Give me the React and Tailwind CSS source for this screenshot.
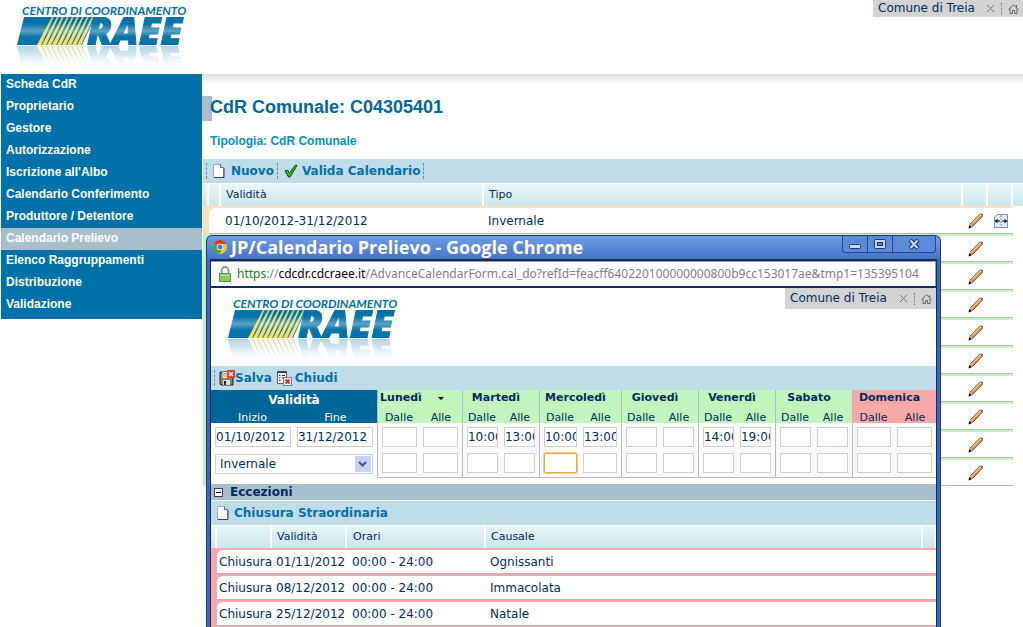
import { useState } from 'react';

const menuItems = [
  'Scheda CdR',
  'Proprietario',
  'Gestore',
  'Autorizzazione',
  "Iscrizione all'Albo",
  'Calendario Conferimento',
  'Produttore / Detentore',
  'Calendario Prelievo',
  'Elenco Raggruppamenti',
  'Distribuzione',
  'Validazione',
];

const days = [
  { name: 'Lunedì', caret: true, slots: [['', ''], ['', '']] },
  { name: 'Martedì', slots: [['10:00', '13:00'], ['', '']] },
  { name: 'Mercoledì', slots: [['10:00', '13:00'], ['', '']] },
  { name: 'Giovedì', slots: [['', ''], ['', '']] },
  { name: 'Venerdì', slots: [['14:00', '19:00'], ['', '']] },
  { name: 'Sabato', slots: [['', ''], ['', '']] },
  { name: 'Domenica', holiday: true, slots: [['', ''], ['', '']] },
];

const dayCols = [
  'w-[43px]', 'w-[42px]', 'w-[39px]', 'w-[38px]', 'w-[41px]', 'w-[41px]', 'w-[39px]',
  'w-[38px]', 'w-[39px]', 'w-[38px]', 'w-[39px]', 'w-[38px]', 'w-[42px]', 'w-[42px]',
];

const closures = [
  { date: '01/11/2012', hours: '00:00 - 24:00', reason: 'Ognissanti' },
  { date: '08/12/2012', hours: '00:00 - 24:00', reason: 'Immacolata' },
  { date: '25/12/2012', hours: '00:00 - 24:00', reason: 'Natale' },
];

const Logo = () => (
  <div className="flex h-[62px] flex-col">
    <svg width="176" height="11" viewBox="0 0 176 11" className="overflow-visible">
      <text
        x="7"
        y="9"
        fontFamily="Lato, 'Open Sans', sans-serif"
        fontWeight="700"
        fontStyle="italic"
        fontSize="12"
        fill="#0071a8"
      >
        CENTRO DI COORDINAMENTO
      </text>
    </svg>
    <svg
      width="176"
      height="28"
      viewBox="0 11 176 28"
      className="[-webkit-box-reflect:below_1px_linear-gradient(transparent_25%,rgba(0,0,0,0.3))]"
    >
      <defs>
        <linearGradient id="logoBlue" gradientUnits="userSpaceOnUse" x1="0" y1="11" x2="0" y2="39">
          <stop offset="0" stopColor="#0071a8" />
          <stop offset="0.25" stopColor="#0b76ab" />
          <stop offset="0.5" stopColor="#5ba3c7" />
          <stop offset="0.7" stopColor="#0a76ab" />
          <stop offset="1" stopColor="#0071a8" />
        </linearGradient>
        <linearGradient id="logoYellow" gradientUnits="userSpaceOnUse" x1="0" y1="11" x2="0" y2="39">
          <stop offset="0" stopColor="#cfd37e" />
          <stop offset="0.5" stopColor="#f5e88c" />
          <stop offset="1" stopColor="#fbdc52" />
        </linearGradient>
      </defs>
      <polygon points="2,39 9,11 80,11 67,39" fill="url(#logoBlue)" />
      {[0, 1, 2, 3, 4, 5, 6, 7, 8].map((i) => {
        const b = 22 + i * 5;
        const t = 37 + i * 5;
        return (
          <polygon
            key={i}
            points={`${b},39 ${b + 4.2},39 ${t + 1.6},11 ${t},11`}
            fill="url(#logoYellow)"
          />
        );
      })}
      <text
        x="72"
        y="39"
        fontFamily="'Open Sans', Lato, sans-serif"
        fontWeight="800"
        fontStyle="italic"
        fontSize="39"
        fill="url(#logoBlue)"
        stroke="url(#logoBlue)"
        strokeWidth="1"
      >
        RAEE
      </text>
    </svg>
  </div>
);

const PageIcon = () => (
  <svg width="12" height="14" viewBox="0 0 12 14">
    <path d="M.5 .5H7.5L10.5 3.5V13.5H.5Z" fill="#fff" stroke="#9aa8b8" />
    <path d="M7.5 .5V3.5H10.5" fill="#dfe6f0" stroke="#55658a" />
    <path d="M11 4V13.5H1" fill="none" stroke="#2e3f6b" />
  </svg>
);

const CheckIcon = () => (
  <svg width="14" height="14" viewBox="0 0 14 14">
    <path d="M1 7L3.5 6L5.5 9L11.5 1L13 1.5L6 13H4.5Z" fill="#19d219" stroke="#0b3d0b" strokeWidth="1" />
  </svg>
);

const PencilIcon = () => (
  <svg width="16" height="16" viewBox="0 0 16 16" className="mx-auto block">
    <path d="M2.5 10.5L11.8 1.2L14.3 1L14.4 3.4L5 13L1 15Z" fill="#d98b3c" stroke="#5a4a52" strokeWidth="0.8" />
    <path d="M4 10.6L12.6 2" stroke="#f7cf9c" strokeWidth="1.2" />
    <path d="M2.5 10.8L4.8 13L1 15Z" fill="#d8c4b8" />
    <path d="M1.7 12L3.8 14L.5 15.5Z" fill="#050510" />
  </svg>
);

const SplitIcon = () => (
  <svg width="16" height="16" viewBox="0 0 16 16" className="mx-auto block">
    <path d="M1.5 4L4.5 1.5H14.5V14.5H1.5Z" fill="#e3ebf8" stroke="#7d8ba8" />
    <path d="M8 2V14" stroke="#7d8ba8" strokeDasharray="2 1" />
    <path d="M2 8H7M9 8H14" stroke="#000" />
    <path d="M4.5 5.5L2 8L4.5 10.5ZM11.5 5.5L14 8L11.5 10.5Z" fill="#101828" />
  </svg>
);

const SaveIcon = () => (
  <svg width="16" height="16" viewBox="0 0 16 16">
    <path d="M1 2H14V15H2L1 14Z" fill="#8a8358" stroke="#23222a" />
    <rect x="3.5" y="2" width="7" height="6" fill="#f4f4f4" />
    <path d="M4 4H9M4 6H9" stroke="#8a8fa0" />
    <rect x="4" y="10" width="7" height="5" fill="#dcdce6" />
    <rect x="5" y="11" width="2" height="4" fill="#23222a" />
    <rect x="8" y="0" width="8" height="8" fill="#ee3d1c" />
    <path d="M10 2L14 6M14 2L10 6" stroke="#fff" strokeWidth="1.4" />
  </svg>
);

const CloseFormIcon = () => (
  <svg width="16" height="16" viewBox="0 0 16 16">
    <path d="M1.5 1.5H10.5V13.5H1.5Z" fill="#f7f9fa" stroke="#5b6478" />
    <path d="M1.5 2H10.5" stroke="#3b4358" strokeWidth="2" />
    <path d="M3 5.5H4.5M6 5.5H9M3 8H4.5M6 8H8M3 10.5H4.5" stroke="#27303f" strokeWidth="1.2" />
    <rect x="7.5" y="7.5" width="8" height="8" fill="#fff" stroke="#7b8190" />
    <path d="M9.5 9.5L13.5 13.5M13.5 9.5L9.5 13.5" stroke="#e8321a" strokeWidth="2" />
  </svg>
);

const ChromeIcon = () => (
  <svg width="14" height="14" viewBox="0 0 14 14">
    <circle cx="7" cy="7" r="7" fill="#f4c51c" />
    <path d="M7 7L1 3.4A7 7 0 0 1 13.3 4H7Z" fill="#dd3b2a" />
    <path d="M7 7L1 3.4A7 7 0 0 0 6.3 14L9.5 8.6Z" fill="#3aa845" />
    <circle cx="7" cy="7" r="3.3" fill="#fff" />
    <circle cx="7" cy="7" r="2.5" fill="#3f7fd0" />
  </svg>
);

const LockIcon = () => (
  <svg width="12" height="16" viewBox="0 0 12 16">
    <path d="M2.5 8V4.5A3.5 3.5 0 0 1 9.5 4.5V8" fill="none" stroke="#8e8e8e" strokeWidth="1.8" />
    <rect x="0.5" y="7.5" width="11" height="8" fill="#8ccb62" stroke="#5b9a3c" />
    <path d="M1 9.5H11" stroke="#b9e39b" />
  </svg>
);

const Grip = () => <span className="h-4 border-l border-dashed border-[#6f86a3]" />;

const AccountBar = ({ className }) => (
  <div className={`flex items-center bg-[#d3d3d3] pl-[5px] text-[#002b5c] ${className}`}>
    <span className="pb-[2px] text-[12px] leading-4">Comune di Treia</span>
    <button aria-label="Chiudi sessione" className="ml-auto">
      <svg width="9" height="9" viewBox="0 0 9 9">
        <path d="M1 1L8 8M8 1L1 8" stroke="#777" />
      </svg>
    </button>
    <span className="mx-[6px] h-3 border-l border-dotted border-gray-500" />
    <button aria-label="Home" className="pr-1">
      <svg width="11" height="10" viewBox="0 0 11 10" fill="none" stroke="#666">
        <path d="M.5 5.5L5.5 .7L10.5 5.5M2 4.5V9.5H4.5V6.5H6.5V9.5H9V4.5M8.5 1V3" />
      </svg>
    </button>
  </div>
);

const headCell = 'border-r-2 border-white bg-linear-to-b from-[#e9f5f7] to-[#cbe6ec] p-0 text-left font-normal';

const Calendars = () => (
  <table className="w-full table-fixed border-separate border-spacing-0">
    <colgroup>
      <col className="w-[6px]" />
      <col className="w-[12px]" />
      <col className="w-[263px]" />
      <col />
      <col className="w-[25px]" />
      <col className="w-[25px]" />
      <col className="w-[10px]" />
    </colgroup>
    <thead>
      <tr className="h-[22px]">
        <th className={headCell} />
        <th className={headCell} />
        <th className={`${headCell} pl-[5px]`}>Validità</th>
        <th className={`${headCell} pl-[5px]`}>Tipo</th>
        <th className={headCell} />
        <th className={headCell} />
        <th className="bg-linear-to-b from-[#e9f5f7] to-[#cbe6ec] p-0" />
      </tr>
    </thead>
    <tbody className="text-[12px]">
      {Array.from({ length: 10 }).map((_, i) => {
        const strip = i === 0 ? 'bg-[#f8e4bc]' : 'bg-[#c1f5bd]';
        const line = i === 0 ? 'border-t-[#f8e4bc]' : 'border-t-[#c1f5bd]';
        const cell = `border-t-2 border-b border-b-[#b4b4c4] ${line} p-0`;
        return (
          <tr key={i} className="h-7">
            <td className={`${strip} p-0`} />
            <td className={`${strip} p-0 pt-[2px]`}>
              <div className="h-[26px] rounded-tl-md border-b border-[#b4b4c4] bg-white" />
            </td>
            <td className={`${cell} pl-1`}>{i === 0 && '01/10/2012-31/12/2012'}</td>
            <td className={`${cell} pl-1`}>{i === 0 && 'Invernale'}</td>
            <td className={cell}>
              <button aria-label="Modifica" className="block w-full"><PencilIcon /></button>
            </td>
            <td className={cell}>
              {i === 0 && <button aria-label="Dividi" className="block w-full"><SplitIcon /></button>}
            </td>
            <td />
          </tr>
        );
      })}
    </tbody>
  </table>
);

const fieldClass = 'block h-5 w-full border border-[#d3cfc6] bg-white text-[12px] text-[#002b5c] outline-none';

const Schedule = () => (
  <table className="w-full table-fixed border-separate border-spacing-0">
    <colgroup>
      <col />
      <col />
      {dayCols.map((w, i) => <col key={i} className={w} />)}
    </colgroup>
    <thead className="text-[11px]">
      <tr className="h-5">
        <th colSpan={2} className="bg-[#006699] p-0 text-[12px] leading-4 text-white">Validità</th>
        {days.map((day) => (
          <th
            key={day.name}
            colSpan={2}
            className={`border-l border-[#b8b8c8] p-0 pb-1 leading-[14px] whitespace-nowrap ${day.caret ? 'pr-4' : 'pr-[10px]'} ${day.holiday ? 'bg-[#f8a8a8]' : 'bg-[#c1f5bd]'}`}
          >
            {day.name}
            {day.caret && (
              <svg width="6" height="3" viewBox="0 0 6 3" className="ml-4 inline-block align-middle">
                <path d="M0 0H6L3 3Z" fill="#000" />
              </svg>
            )}
          </th>
        ))}
      </tr>
      <tr className="h-[13px] leading-[11px]">
        <th className="bg-[#006699] p-0 pt-[2px] font-normal text-white">Inizio</th>
        <th className="bg-[#006699] p-0 pt-[2px] font-normal text-white">Fine</th>
        {days.map((day) => ['Dalle', 'Alle'].map((label, i) => (
          <th
            key={day.name + label}
            className={`p-0 pt-[2px] font-normal ${i === 0 ? 'border-l border-[#b8b8c8]' : ''} ${day.holiday ? 'bg-[#f8a8a8]' : 'bg-[#c1f5bd]'}`}
          >
            {label}
          </th>
        )))}
      </tr>
    </thead>
    <tbody>
      {[0, 1].map((row) => (
        <tr key={row}>
          {row === 0 ? (
            <>
              <td className="pt-1 pr-[3px] pb-[3px] pl-1">
                <input aria-label="Inizio" defaultValue="01/10/2012" className={fieldClass} />
              </td>
              <td className="pt-1 pr-1 pb-[3px] pl-[3px]">
                <input aria-label="Fine" defaultValue="31/12/2012" className={fieldClass} />
              </td>
            </>
          ) : (
            <td colSpan={2} className="px-1 pt-[3px] pb-1">
              <div className="relative">
                <select aria-label="Tipo" className={`${fieldClass} appearance-none pl-1`}>
                  <option>Invernale</option>
                  <option>Estivo</option>
                </select>
                <span className="pointer-events-none absolute top-[2px] right-[2px] flex h-4 w-4 items-center justify-center bg-[#c3d3fb]">
                  <svg width="9" height="6" viewBox="0 0 9 6">
                    <path d="M1 1L4.5 4.5L8 1" fill="none" stroke="#44557f" strokeWidth="2" />
                  </svg>
                </span>
              </div>
            </td>
          )}
          {days.map((day) => day.slots[row].map((value, i) => {
            const active = row === 1 && i === 0 && day.name === 'Mercoledì';
            return (
              <td
                key={day.name + i}
                className={`border-[#b8b8c8] bg-[#fafafa] ${row === 0 ? 'pt-1 pb-[3px]' : 'border-b pt-[3px] pb-1'} ${i === 0 ? 'border-l pr-[3px] pl-1' : 'pr-1 pl-[3px]'}`}
              >
                <input
                  aria-label={`${day.name} ${i === 0 ? 'dalle' : 'alle'} ${row + 1}`}
                  defaultValue={value}
                  className={active
                    ? 'block h-5 w-full rounded-xs border border-[#e0a840] bg-white ring-1 ring-[#f0cf90] outline-none'
                    : fieldClass}
                />
              </td>
            );
          }))}
        </tr>
      ))}
    </tbody>
  </table>
);

const Exceptions = () => (
  <table className="w-full table-fixed border-separate border-spacing-0">
    <colgroup>
      <col className="w-[6px]" />
      <col className="w-[55px]" />
      <col className="w-[75px]" />
      <col className="w-[139px]" />
      <col />
      <col className="w-[13px]" />
    </colgroup>
    <thead>
      <tr className="h-[22px]">
        <th className={headCell} />
        <th className={headCell} />
        <th className={`${headCell} pl-[5px]`}>Validità</th>
        <th className={`${headCell} pl-[6px]`}>Orari</th>
        <th className={`${headCell} pl-[5px]`}>Causale</th>
        <th className={headCell} />
      </tr>
    </thead>
    <tbody className="text-[12px]">
      {closures.map((c) => (
        <tr key={c.date} className="h-[26px] bg-[#f8a8a8]">
          <td className="p-0" />
          <td colSpan={5} className="p-0 pt-[2px]">
            <div className="flex h-6 items-center rounded-tl-md border-b border-[#b4b4c4] bg-white">
              <span className="w-[59px] pl-[2px]">Chiusura</span>
              <span className="w-[76px] pt-px">{c.date}</span>
              <span className="w-[138px] pt-px">{c.hours}</span>
              <span className="pt-px">{c.reason}</span>
            </div>
          </td>
        </tr>
      ))}
      <tr className="h-[2px] bg-[#f8a8a8]"><td colSpan={6} className="p-0" /></tr>
    </tbody>
  </table>
);

const Popup = () => {
  const [open, setOpen] = useState(true);

  return (
    <section className="absolute top-[235px] bottom-0 left-[206px] flex w-[735px] flex-col overflow-hidden rounded-t-md border-x border-t border-[#2b3a5c] bg-[#3a68bf] px-[3px]">
      <div className="-mx-[3px] flex h-[23px] shrink-0 items-start bg-linear-to-b from-[#6e9ce4] to-[#4473cb] pl-[6px]">
        <div className="flex h-[22px] items-center gap-1">
          <ChromeIcon />
          <h2 className="font-['Open_Sans',sans-serif] text-[18px] leading-[22px] font-bold whitespace-nowrap text-white">
            JP/Calendario Prelievo - Google Chrome
          </h2>
        </div>
        <div className="mr-1 ml-auto flex h-[17px] rounded-b-sm border-x border-b border-[#22458f] bg-[#5c8bd9]">
          <button aria-label="Riduci" className="flex w-[25px] items-end justify-center border-r border-[#22458f] pb-[3px]">
            <svg width="12" height="5" viewBox="0 0 12 5"><rect x=".5" y=".5" width="11" height="4" rx="1" fill="#c9daf7" stroke="#1c3872" /></svg>
          </button>
          <button aria-label="Ingrandisci" className="flex w-[25px] items-center justify-center border-r border-[#22458f]">
            <svg width="12" height="11" viewBox="0 0 12 11">
              <rect x=".5" y=".5" width="11" height="9" rx="1" fill="#c9daf7" stroke="#1c3872" />
              <rect x="3.5" y="3.5" width="5" height="3" fill="#5c8bd9" stroke="#1c3872" />
            </svg>
          </button>
          <button aria-label="Chiudi finestra" className="flex w-[42px] items-center justify-center">
            <svg width="12" height="11" viewBox="0 0 12 11">
              <path d="M2 1L10 9.5M10 1L2 9.5" stroke="#1c3872" strokeWidth="4.4" />
              <path d="M2.5 1.5L9.5 9M9.5 1.5L2.5 9" stroke="#c9daf7" strokeWidth="2.2" />
            </svg>
          </button>
        </div>
      </div>

      <div className="flex min-h-0 flex-1 flex-col border-x border-t-2 border-[#14285c] bg-white">
        <div className="flex h-[25px] shrink-0 items-center gap-[6px] overflow-hidden border-t border-r border-[#9a9a9a] pr-[2px] pl-2">
          <span className="shrink-0"><LockIcon /></span>
          <div className="overflow-hidden font-['Noto_Sans',sans-serif] text-[12px] whitespace-nowrap text-[#808080]">
            <span className="text-[#0a8a0a]">https</span>://<span className="text-black">cdcdr.cdcraee.it</span>
            /AdvanceCalendarForm.cal_do?refId=feacff640220100000000800b9cc153017ae&tmp1=135395104
          </div>
        </div>
        <div className="flex h-20 shrink-0 items-start justify-between border-t-2 border-[#14285c]">
          <div className="pt-[11px] pl-[15px]"><Logo /></div>
          <AccountBar className="h-[21px] w-[151px]" />
        </div>

        <div className="flex h-6 shrink-0 items-center bg-[#c0dce6] pb-px pl-[3px] text-[12px] font-bold text-[#0071a8]">
          <Grip />
          <button className="ml-1 flex items-center"><SaveIcon />Salva</button>
          <button className="ml-1 flex items-center gap-[3px]"><CloseFormIcon />Chiudi</button>
        </div>

        <Schedule />

        <h3 className="mt-[6px] flex h-4 shrink-0 items-center gap-[7px] bg-[#a7bfcd] pl-[3px] text-[12px] font-bold">
          <button
            aria-label="Espandi o comprimi"
            onClick={() => setOpen(!open)}
            className="flex h-[9px] w-[9px] items-center justify-center border border-[#404040] bg-white"
          >
            <span className="h-px w-[5px] bg-black" />
          </button>
          Eccezioni
        </h3>
        {open && (
          <>
            <div className="my-px flex h-6 shrink-0 items-center bg-[#c0dce6] pb-px pl-[6px] text-[12px] font-bold text-[#0071a8]">
              <button className="flex items-center gap-[5px]"><PageIcon />Chiusura Straordinaria</button>
            </div>
            <Exceptions />
          </>
        )}
      </div>
    </section>
  );
};

const App = () => (
  <div className="relative h-screen overflow-hidden bg-white font-['DejaVu_Sans',sans-serif] text-[11px] text-[#002b5c]">
    <header className="flex h-[74px] items-start justify-between">
      <div className="pt-[6px] pl-[15px]"><Logo /></div>
      <AccountBar className="h-[17px] w-[150px]" />
    </header>

    <div className="flex items-start pl-px">
      <nav className="flex w-[201px] shrink-0 flex-col bg-[#0071a8] pb-[3px] font-['Liberation_Sans',sans-serif] text-[12px] font-bold text-white">
        {menuItems.map((item) => (
          <a
            key={item}
            href="#"
            className={`flex h-[22px] items-center pb-[2px] pl-[5px] ${item === 'Calendario Prelievo' ? 'bg-[#a7bfcd]' : ''}`}
          >
            {item}
          </a>
        ))}
      </nav>

      <main className="min-w-0 flex-1">
        <div className="ml-px h-[22px] bg-linear-to-b from-[#e0e0e0] to-white to-50%" />
        <div className="flex font-['Liberation_Sans',sans-serif]">
          <span className="h-[25px] w-[10px] bg-[#a7bfcd]" />
          <h1 className="-ml-[2px] text-[18px] leading-[22px] font-bold text-[#006699]">
            CdR Comunale: C04305401
          </h1>
        </div>
        <p className="mt-3 mb-[10px] pl-2 font-['Liberation_Sans',sans-serif] text-[12px] leading-4 font-bold text-[#0090c8]">
          Tipologia: CdR Comunale
        </p>
        <div className="ml-px">
          <div className="mb-px flex h-6 items-center bg-[#c0dce6] pb-px pl-[3px] text-[12px] font-bold text-[#0071a8]">
            <Grip />
            <button className="ml-[6px] flex items-center gap-[6px]"><PageIcon />Nuovo</button>
            <span className="ml-[3px] flex"><Grip /></span>
            <button className="ml-[6px] flex items-center gap-1"><CheckIcon />Valida Calendario</button>
            <span className="ml-[3px] flex"><Grip /></span>
          </div>
          <Calendars />
        </div>
      </main>
    </div>

    <Popup />
  </div>
);

export default App;
